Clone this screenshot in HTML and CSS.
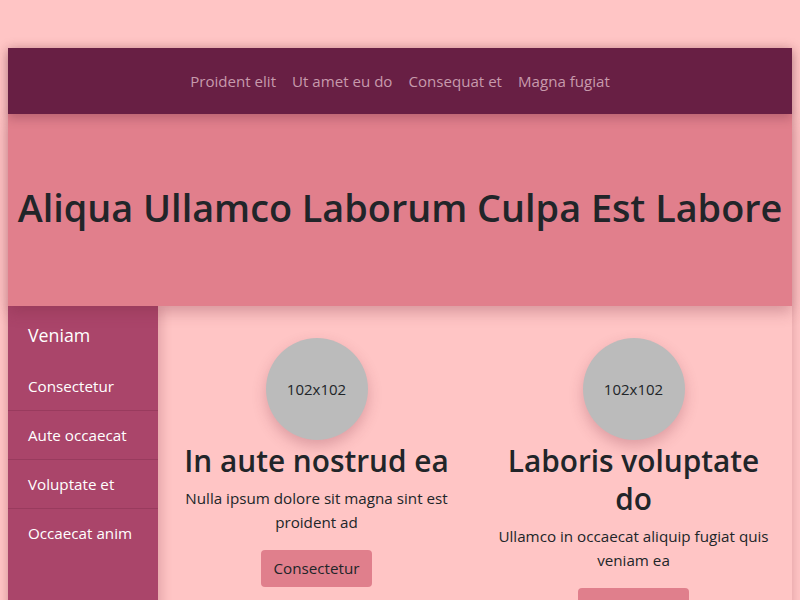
FILE: index.html
```html
<!DOCTYPE html>
<html lang="en">
<head>
<meta charset="utf-8">
<title>Aliqua Ullamco Laborum Culpa Est Labore</title>
<link rel="stylesheet" href="styles.css">
</head>
<body>
<div class="page">
  <nav class="topnav">
    <a href="#" class="nav-link">Proident elit</a>
    <a href="#" class="nav-link">Ut amet eu do</a>
    <a href="#" class="nav-link">Consequat et</a>
    <a href="#" class="nav-link">Magna fugiat</a>
  </nav>
  <header class="hero">
    <h1 class="hero-title">Aliqua Ullamco Laborum Culpa Est Labore</h1>
  </header>
  <div class="body-row">
    <aside class="sidebar">
      <div class="side-title">Veniam</div>
      <a href="#" class="side-item">Consectetur</a>
      <a href="#" class="side-item">Aute occaecat</a>
      <a href="#" class="side-item">Voluptate et</a>
      <a href="#" class="side-item">Occaecat anim</a>
    </aside>
    <main class="main">
      <div class="card">
        <div class="avatar">102x102</div>
        <h2 class="card-title">In aute nostrud ea</h2>
        <p class="card-text">Nulla ipsum dolore sit magna sint est proident ad</p>
        <a href="#" class="btn">Consectetur</a>
      </div>
      <div class="card">
        <div class="avatar">102x102</div>
        <h2 class="card-title">Laboris voluptate do</h2>
        <p class="card-text">Ullamco in occaecat aliquip fugiat quis veniam ea</p>
        <a href="#" class="btn">Consectetur</a>
      </div>
    </main>
  </div>
</div>
</body>
</html>
```

FILE: styles.css
```css
html, body {
  margin: 0;
  padding: 0;
}
body {
  background: #ffc5c5;
  font-family: "Open Sans", "Noto Sans", sans-serif;
  color: #212529;
  font-size: 15.2px;
  line-height: 24px;
  padding: 48px 8px 0;
}
.page {
  box-shadow: 0 0 10px rgba(120, 40, 60, 0.25);
  min-height: 600px;
}
.topnav {
  background: #681f44;
  height: 66px;
  display: flex;
  justify-content: center;
  align-items: center;
  position: relative;
  z-index: 3;
  box-shadow: 0 4px 10px rgba(60, 10, 30, 0.25);
}
.nav-link {
  color: #c79aac;
  text-decoration: none;
  padding: 0 8px;
  font-size: 15.1px;
}
.hero {
  background: #e17f8c;
  height: 192px;
  display: flex;
  align-items: center;
  justify-content: center;
  position: relative;
  z-index: 2;
  box-shadow: 0 6px 14px rgba(120, 40, 60, 0.3);
}
.hero-title {
  margin: 0 0 4px;
  font-size: 37.8px;
  font-weight: 600;
  line-height: 48px;
  color: #212529;
  white-space: nowrap;
}
.body-row {
  display: flex;
}
.sidebar {
  width: 150px;
  flex: none;
  background: #aa456a;
  min-height: 294px;
  display: flex;
  flex-direction: column;
  position: relative;
  z-index: 1;
  box-shadow: 4px 0 10px rgba(120, 40, 60, 0.2);
}
.side-title {
  color: #fff;
  font-size: 17.8px;
  padding: 15px 20px 13px;
  line-height: 28px;
}
.side-item {
  color: #fff;
  text-decoration: none;
  font-size: 15.2px;
  line-height: 24px;
  padding: 12px 20px 12px;
  border-bottom: 1px solid #993b5e;
}
.side-item:last-child {
  border-bottom: none;
}
.main {
  flex: 1;
  display: grid;
  grid-template-columns: 1fr 1fr;
  padding-top: 32px;
}
.card {
  display: flex;
  flex-direction: column;
  align-items: center;
  text-align: center;
  padding: 0 15px;
}
.avatar {
  width: 102px;
  height: 102px;
  border-radius: 50%;
  background: #bbbbbb;
  display: flex;
  align-items: center;
  justify-content: center;
  font-size: 15px;
  color: #212529;
  box-shadow: 0 6px 14px rgba(120, 40, 60, 0.25);
}
.card-title {
  margin: 2px 0 6px;
  font-size: 29.8px;
  font-weight: 600;
  line-height: 38px;
}
.card-text {
  margin: 0 0 16px;
  line-height: 24px;
}
.btn {
  display: inline-block;
  background: #e07f8c;
  color: #212529;
  text-decoration: none;
  padding: 6px 13px 7px;
  border-radius: 4px;
  line-height: 24px;
}
```
